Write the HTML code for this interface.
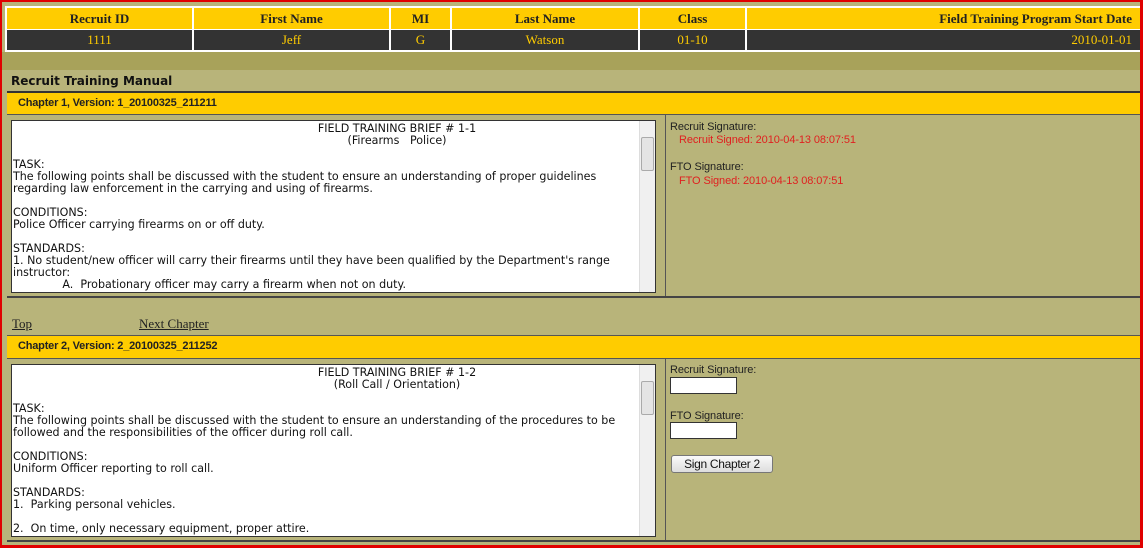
<!DOCTYPE html><html><head><style>
*{margin:0;padding:0;box-sizing:border-box}
body{width:1143px;height:548px;overflow:hidden;background:#B8B47A;font-family:"Liberation Sans",sans-serif;position:relative}
.frame{position:absolute;inset:0;border:2px solid #E00000;border-right-width:3px;border-bottom-width:3px;pointer-events:none;z-index:9}
.a{position:absolute}
.hc{position:absolute;background:#FFCC00;color:#222;font:bold 13px "Liberation Serif",serif;text-align:center;line-height:21px;height:21px}
.dc{position:absolute;background:#333;color:#FFCC00;font:13px "Liberation Serif",serif;text-align:center;line-height:20px;height:20px}
.ch{position:absolute;left:7px;width:1133px;height:23px;background:#FFCC00;border-top:2px solid #333;font:bold 11px "Liberation Sans",sans-serif;letter-spacing:-0.2px;line-height:21px;padding-left:11px;color:#222}
.ta{position:absolute;left:11px;width:645px;height:173px;background:#fff;border:1px solid #333;font:11.1px/12px "DejaVu Sans",sans-serif;color:#111;padding:2px 18px 0 1px;overflow:hidden}
.ta p{height:12px;white-space:pre}
.ta .c{text-align:center;padding-left:144px}
.sb{position:absolute;right:0;top:0;width:16px;height:100%;background:#f0f0f0;border-left:1px solid #ddd}
.sb i{position:absolute;left:1px;top:16px;width:13px;height:34px;background:#e4e4e4;border:1px solid #aaa;border-radius:2px}
.lbl{position:absolute;font:11px "Liberation Sans",sans-serif;letter-spacing:-0.1px;color:#222}
.red{color:#E02020}
.inp{position:absolute;width:67px;height:17px;background:#fff;border:1px solid #333}
.lk{position:absolute;font:13px 'Liberation Serif',serif;color:#222;text-decoration:underline}
</style></head><body>
<div class="frame"></div>
<div class="a" style="left:5px;top:6px;width:1136px;height:46px;background:#fff"></div>
<div class="hc" style="left:7px;top:8px;width:185px">Recruit ID</div>
<div class="hc" style="left:194px;top:8px;width:195px">First Name</div>
<div class="hc" style="left:391px;top:8px;width:59px">MI</div>
<div class="hc" style="left:452px;top:8px;width:186px">Last Name</div>
<div class="hc" style="left:640px;top:8px;width:105px">Class</div>
<div class="hc" style="left:747px;top:8px;width:393px;text-align:right;padding-right:8px">Field Training Program Start Date</div>
<div class="dc" style="left:7px;top:30px;width:185px">1111</div>
<div class="dc" style="left:194px;top:30px;width:195px">Jeff</div>
<div class="dc" style="left:391px;top:30px;width:59px">G</div>
<div class="dc" style="left:452px;top:30px;width:186px">Watson</div>
<div class="dc" style="left:640px;top:30px;width:105px">01-10</div>
<div class="dc" style="left:747px;top:30px;width:393px;text-align:right;padding-right:8px">2010-01-01</div>
<div class="a" style="left:2px;top:52px;width:1138px;height:18px;background:#A8A25A"></div>
<div class="a" style="left:11px;top:74px;font:bold 12px 'DejaVu Sans',sans-serif;color:#111">Recruit Training Manual</div>
<div class="ch" style="top:91px">Chapter 1, Version: 1_20100325_211211</div>
<div class="a" style="left:7px;top:114px;width:1133px;height:184px;border-top:1px solid #555;border-bottom:2px solid #444"></div>
<div class="a" style="left:665px;top:114px;width:1px;height:182px;background:#555"></div>
<div class="ta" style="top:120px">
<p class="c">FIELD TRAINING BRIEF # 1-1</p>
<p class="c">(Firearms   Police)</p>
<p></p>
<p>TASK:</p>
<p>The following points shall be discussed with the student to ensure an understanding of proper guidelines</p>
<p>regarding law enforcement in the carrying and using of firearms.</p>
<p></p>
<p>CONDITIONS:</p>
<p>Police Officer carrying firearms on or off duty.</p>
<p></p>
<p>STANDARDS:</p>
<p>1. No student/new officer will carry their firearms until they have been qualified by the Department's range</p>
<p>instructor:</p>
<p>              A.  Probationary officer may carry a firearm when not on duty.</p>
<div class="sb"><i></i></div></div>
<div class="lbl" style="left:670px;top:121px">Recruit Signature:</div>
<div class="lbl red" style="left:679px;top:134px">Recruit Signed: 2010-04-13 08:07:51</div>
<div class="lbl" style="left:670px;top:161px">FTO Signature:</div>
<div class="lbl red" style="left:679px;top:175px">FTO Signed: 2010-04-13 08:07:51</div>
<div class="lk" style="left:12px;top:316px">Top</div>
<div class="lk" style="left:139px;top:316px">Next Chapter</div>
<div class="ch" style="top:335px;border-top:1px solid #555">Chapter 2, Version: 2_20100325_211252</div>
<div class="a" style="left:7px;top:358px;width:1133px;height:184px;border-top:1px solid #555;border-bottom:2px solid #444"></div>
<div class="a" style="left:665px;top:358px;width:1px;height:182px;background:#555"></div>
<div class="ta" style="top:364px">
<p class="c">FIELD TRAINING BRIEF # 1-2</p>
<p class="c">(Roll Call / Orientation)</p>
<p></p>
<p>TASK:</p>
<p>The following points shall be discussed with the student to ensure an understanding of the procedures to be</p>
<p>followed and the responsibilities of the officer during roll call.</p>
<p></p>
<p>CONDITIONS:</p>
<p>Uniform Officer reporting to roll call.</p>
<p></p>
<p>STANDARDS:</p>
<p>1.  Parking personal vehicles.</p>
<p></p>
<p>2.  On time, only necessary equipment, proper attire.</p>
<div class="sb"><i></i></div></div>
<div class="lbl" style="left:670px;top:364px">Recruit Signature:</div>
<div class="inp" style="left:670px;top:377px"></div>
<div class="lbl" style="left:670px;top:410px">FTO Signature:</div>
<div class="inp" style="left:670px;top:422px"></div>
<div class="a" style="left:671px;top:455px;width:102px;height:18px;border:1px solid #777;border-radius:3px;background:linear-gradient(#fafafa,#ddd);font:12px 'Liberation Sans',sans-serif;letter-spacing:-0.3px;text-align:center;line-height:16px;color:#111">Sign Chapter 2</div>
</body></html>
